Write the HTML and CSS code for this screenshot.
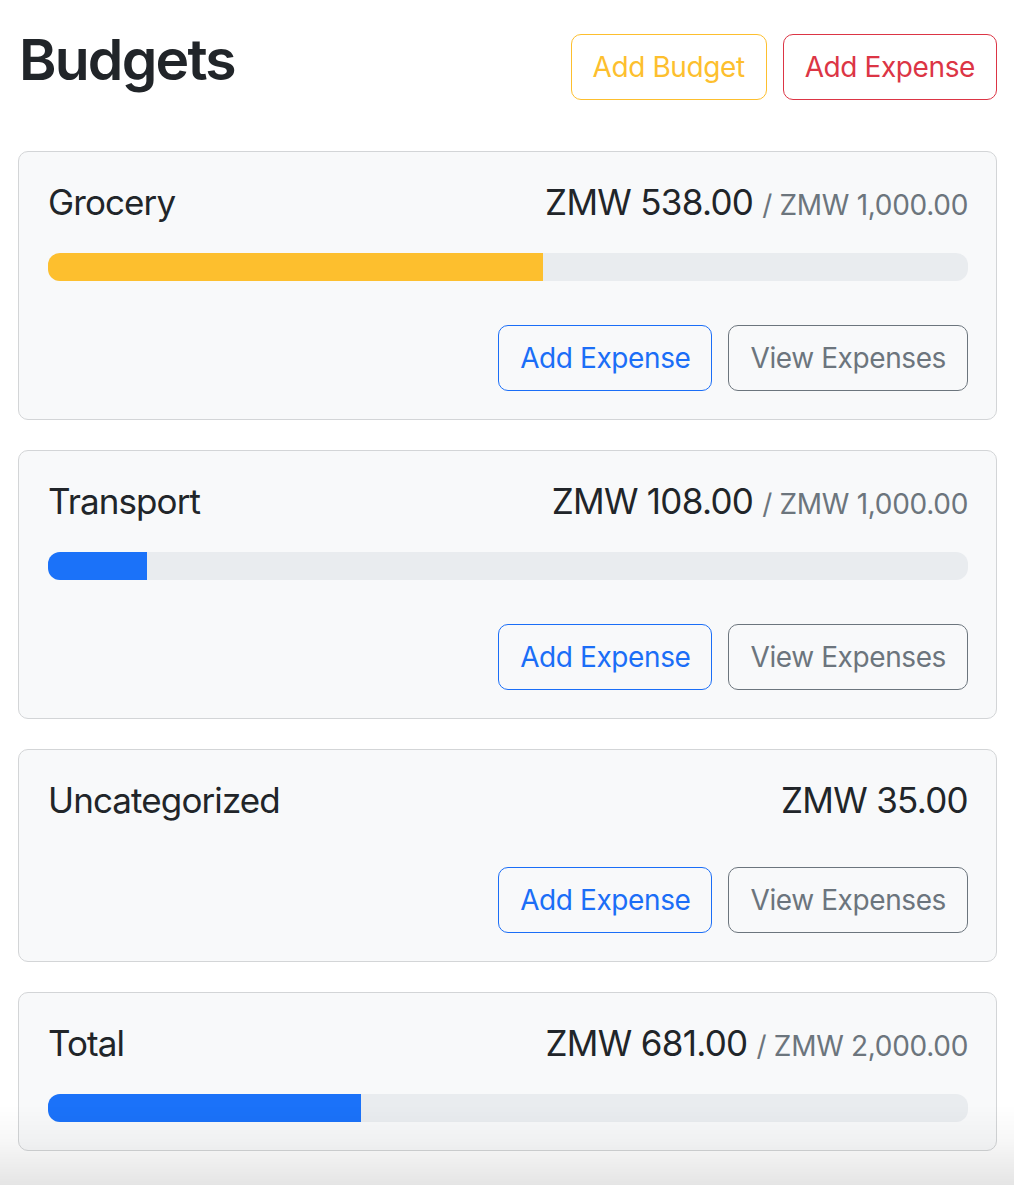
FILE: index.html
```html
<!DOCTYPE html>
<html lang="en">
<head>
<meta charset="utf-8">
<title>Budgets</title>
<link rel="stylesheet" href="styles.css">
</head>
<body>
<div class="container">
  <header class="page-header">
    <h1 class="page-title">Budgets</h1>
    <div class="header-actions">
      <button class="btn btn-outline-warning">Add Budget</button>
      <button class="btn btn-outline-danger">Add Expense</button>
    </div>
  </header>

  <div class="stack">
    <section class="card">
      <div class="card-head">
        <div class="card-name">Grocery</div>
        <div class="amount">ZMW 538.00<span class="max">/ ZMW 1,000.00</span></div>
      </div>
      <div class="progress"><div class="bar bar-warning" style="width: 53.8%"></div></div>
      <div class="card-actions">
        <button class="btn btn-outline-primary">Add Expense</button>
        <button class="btn btn-outline-secondary">View Expenses</button>
      </div>
    </section>

    <section class="card">
      <div class="card-head">
        <div class="card-name">Transport</div>
        <div class="amount">ZMW 108.00<span class="max">/ ZMW 1,000.00</span></div>
      </div>
      <div class="progress"><div class="bar bar-primary" style="width: 10.8%"></div></div>
      <div class="card-actions">
        <button class="btn btn-outline-primary">Add Expense</button>
        <button class="btn btn-outline-secondary">View Expenses</button>
      </div>
    </section>

    <section class="card">
      <div class="card-head">
        <div class="card-name">Uncategorized</div>
        <div class="amount">ZMW 35.00</div>
      </div>
      <div class="card-actions">
        <button class="btn btn-outline-primary">Add Expense</button>
        <button class="btn btn-outline-secondary">View Expenses</button>
      </div>
    </section>

    <section class="card card-total">
      <div class="card-head">
        <div class="card-name">Total</div>
        <div class="amount">ZMW 681.00<span class="max">/ ZMW 2,000.00</span></div>
      </div>
      <div class="progress"><div class="bar bar-primary" style="width: 34.05%"></div></div>
    </section>
  </div>
</div>
<div class="bottom-fade"></div>
</body>
</html>
```

FILE: styles.css
```css
* { box-sizing: border-box; }

html, body {
  margin: 0;
  padding: 0;
  background: #ffffff;
}

body {
  font-family: Inter, "Noto Sans", "Liberation Sans", sans-serif;
  color: #212529;
  -webkit-font-smoothing: antialiased;
}

.container {
  padding: 26px 17px 40px 18px;
}

.page-header {
  display: flex;
  justify-content: space-between;
  align-items: flex-start;
  margin-bottom: 51px;
}

.page-title {
  margin: 0;
  font-size: 57px;
  line-height: 68px;
  font-weight: 600;
  letter-spacing: -1.8px;
  padding-left: 1px;
}

.header-actions {
  display: flex;
  gap: 16px;
  margin-top: 8px;
}

.btn {
  font-family: inherit;
  font-size: 28px;
  line-height: 42px;
  padding: 11px 21px;
  border: 1px solid;
  border-radius: 10px;
  background: transparent;
  font-weight: 400;
  letter-spacing: -0.4px;
  cursor: pointer;
}

.btn-outline-warning { color: #fdbf2e; border-color: #fdbf2e; }
.btn-outline-danger { color: #dc3545; border-color: #dc3545; }
.btn-outline-primary { color: #1b6ef7; border-color: #1b6ef7; }
.btn-outline-secondary { color: #6c757d; border-color: #6c757d; }

.stack {
  display: flex;
  flex-direction: column;
  gap: 30px;
}

.card {
  background: #f8f9fa;
  border: 1px solid #d3d5d7;
  border-radius: 10px;
  padding: 28px 28px 28px 29px;
  display: flex;
  flex-direction: column;
}

.card-head {
  display: flex;
  justify-content: space-between;
  align-items: baseline;
  height: 45px;
  padding-top: 1px;
}

.card-name {
  font-size: 35px;
  line-height: 42px;
  letter-spacing: -0.9px;
}

.amount {
  font-size: 35px;
  line-height: 42px;
  letter-spacing: -0.7px;
  display: flex;
  align-items: baseline;
}

.max {
  font-size: 28px;
  letter-spacing: -0.3px;
  color: #6c757d;
  margin-left: 9px;
}

.progress {
  margin-top: 28px;
  height: 28px;
  background: #e9ecef;
  border-radius: 12px;
  overflow: hidden;
  display: flex;
}

.bar { height: 100%; }
.bar-warning { background: #fdbf2e; }
.bar-primary { background: #1b72f9; }

.card-actions {
  display: flex;
  justify-content: flex-end;
  gap: 16px;
  margin-top: 44px;
}

.bottom-fade {
  position: fixed;
  left: 0;
  right: 0;
  bottom: 0;
  height: 80px;
  pointer-events: none;
  background: linear-gradient(to bottom, rgba(0,0,0,0) 0%, rgba(0,0,0,0.03) 45%, rgba(0,0,0,0.1) 100%);
}
```
